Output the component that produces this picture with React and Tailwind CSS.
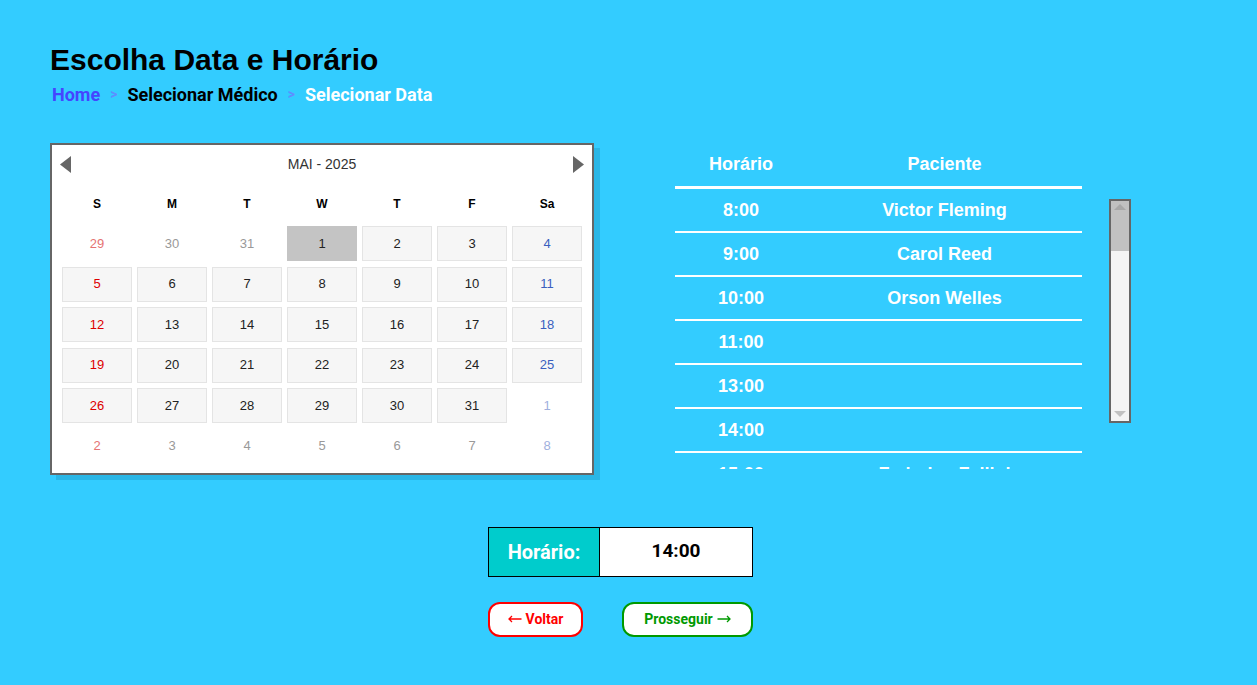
import React from 'react'

const weeks = [
  [
    { d: 29, out: true },
    { d: 30, out: true },
    { d: 31, out: true },
    { d: 1, sel: true },
    { d: 2 },
    { d: 3 },
    { d: 4 },
  ],
  [{ d: 5 }, { d: 6 }, { d: 7 }, { d: 8 }, { d: 9 }, { d: 10 }, { d: 11 }],
  [{ d: 12 }, { d: 13 }, { d: 14 }, { d: 15 }, { d: 16 }, { d: 17 }, { d: 18 }],
  [{ d: 19 }, { d: 20 }, { d: 21 }, { d: 22 }, { d: 23 }, { d: 24 }, { d: 25 }],
  [{ d: 26 }, { d: 27 }, { d: 28 }, { d: 29 }, { d: 30 }, { d: 31 }, { d: 1, out: true }],
  [
    { d: 2, out: true },
    { d: 3, out: true },
    { d: 4, out: true },
    { d: 5, out: true },
    { d: 6, out: true },
    { d: 7, out: true },
    { d: 8, out: true },
  ],
]

const agenda = [
  { h: '8:00', p: 'Victor Fleming' },
  { h: '9:00', p: 'Carol Reed' },
  { h: '10:00', p: 'Orson Welles' },
  { h: '11:00', p: '' },
  { h: '13:00', p: '' },
  { h: '14:00', p: '' },
  { h: '15:00', p: 'Federico Fellini' },
  { h: '16:00', p: '' },
]

const dayColor = (col, out) => {
  if (col === 0) return out ? 'text-[#e57373]' : 'text-[#dd0000]'
  if (col === 6) return out ? 'text-[#9fb0dd]' : 'text-[#3a5fbf]'
  return out ? 'text-[#999999]' : 'text-[#222222]'
}

const Arrow = ({ left }) => (
  <svg width="14" height="8" viewBox="0 0 14 8" className="inline-block">
    {left ? (
      <path d="M13.5 4H1M4 1L1 4l3 3" fill="none" stroke="currentColor" strokeWidth="1.3" />
    ) : (
      <path d="M0.5 4H13M10 1l3 3-3 3" fill="none" stroke="currentColor" strokeWidth="1.3" />
    )}
  </svg>
)

const Calendar = () => (
  <div className="w-[544px] shrink-0 border-2 border-[#666666] bg-white shadow-[6px_5px_0_0_#2ab6e6] px-[10px] pb-[9px] font-['Liberation_Sans',Arial,sans-serif]">
    {/* header */}
    <div className="h-[38px] flex items-center justify-between -mx-[2px]">
      <svg width="11" height="17" viewBox="0 0 11 17">
        <polygon points="11,0 11,17 0,8.5" fill="#666666" />
      </svg>
      <span className="text-[14px] text-[#333333]">MAI - 2025</span>
      <svg width="11" height="17" viewBox="0 0 11 17">
        <polygon points="0,0 0,17 11,8.5" fill="#666666" />
      </svg>
    </div>
    <div className="grid grid-cols-7 gap-x-[5px] h-[38px] pt-[4px] items-center">
      {['S', 'M', 'T', 'W', 'T', 'F', 'Sa'].map((n, i) => (
        <span key={i} className="text-center text-[12px] font-bold text-black">
          {n}
        </span>
      ))}
    </div>
    <div className="grid grid-cols-7 gap-x-[5px] gap-y-[5.5px] mt-[5px]">
      {weeks.flatMap((w, r) =>
        w.map((c, i) => (
          <div
            key={r + '-' + i}
            className={
              'h-[35px] flex items-center justify-center text-[13px] border ' +
              (c.sel
                ? 'bg-[#c4c4c4] border-[#c4c4c4] '
                : c.out
                ? 'border-transparent '
                : 'bg-[#f6f6f6] border-[#e4e4e4] ') +
              (c.sel ? 'text-[#222222]' : dayColor(i, c.out))
            }
          >
            {c.d}
          </div>
        ))
      )}
    </div>
  </div>
)

const Agenda = () => (
  <div className="flex items-start ml-[81px]">
    <div className="w-[407px] h-[326px] overflow-hidden font-['Liberation_Sans',Arial,sans-serif] font-bold text-white text-[18px]">
      <div className="flex h-[46px] items-center border-b-[3px] border-white">
        <div className="w-[132px] text-center">Horário</div>
        <div className="flex-1 text-center">Paciente</div>
      </div>
      {agenda.map((a) => (
        <div key={a.h} className="flex h-[44px] items-center border-b-2 border-white">
          <div className="w-[132px] text-center">{a.h}</div>
          <div className="flex-1 text-center">{a.p}</div>
        </div>
      ))}
    </div>
    {/* scrollbar */}
    <div className="ml-[27px] mt-[56px] w-[22px] h-[224px] border-2 border-[#666666] bg-[#f4f4f4] flex flex-col justify-between">
      <div className="h-[50px] bg-[#c1c1c1] flex justify-center pt-[3px]">
        <svg width="12" height="6" viewBox="0 0 12 6">
          <polygon points="0,6 12,6 6,0" fill="#a8a8a8" />
        </svg>
      </div>
      <div className="flex justify-center pb-[4px]">
        <svg width="12" height="6" viewBox="0 0 12 6">
          <polygon points="0,0 12,0 6,6" fill="#c1c1c1" />
        </svg>
      </div>
    </div>
  </div>
)

export default function App() {
  return (
    <div className="min-h-[685px] w-full bg-[#33ccff] pl-[50px] pt-[42px]">
      <h1 className="text-[30px] leading-[36px] font-bold text-black font-['Liberation_Sans',Arial,sans-serif]">
        Escolha Data e Horário
      </h1>
      <div className="flex items-center gap-[10px] mt-[3px] ml-[2px] font-['Roboto',sans-serif] font-bold text-[18px] leading-[27px]">
        <span className="text-[#4545ff]">Home</span>
        <span className="text-[#5f8dff] text-[14px]">&gt;</span>
        <span className="text-black">Selecionar Médico</span>
        <span className="text-[#5f8dff] text-[14px]">&gt;</span>
        <span className="text-white">Selecionar Data</span>
      </div>

      <div className="flex items-start mt-[35px]">
        <Calendar />
        <Agenda />
      </div>

      <div className="ml-[438px] mt-[52px] flex flex-col">
        <div className="flex h-[50px] w-[265px] border border-black font-['Roboto',sans-serif] font-bold">
          <div className="w-[111px] bg-[#00cccc] text-white text-[20px] flex items-center justify-center border-r border-black">
            Horário:
          </div>
          <div className="flex-1 bg-white text-black text-[19px] flex items-center justify-center">14:00</div>
        </div>
        <div className="flex gap-[39px] mt-[25px] font-['Roboto',sans-serif] font-bold text-[14px]">
          <button className="w-[95px] h-[35px] rounded-[12px] border-2 border-[#ff0000] bg-white text-[#ff0000] flex items-center justify-center gap-[4px]">
            <Arrow left />
            Voltar
          </button>
          <button className="w-[131px] h-[35px] rounded-[12px] border-2 border-[#009900] bg-white text-[#009900] flex items-center justify-center gap-[4px]">
            Prosseguir
            <Arrow />
          </button>
        </div>
      </div>
    </div>
  )
}
